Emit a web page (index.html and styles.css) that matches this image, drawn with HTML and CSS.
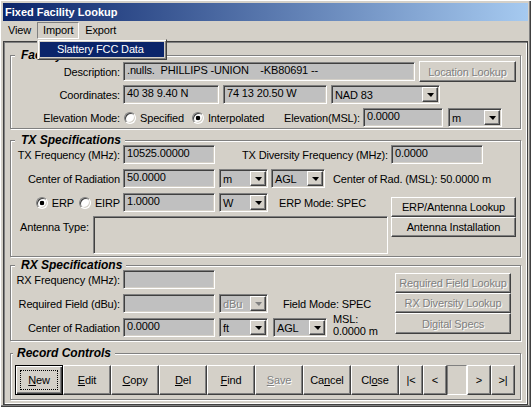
FILE: index.html
```html
<!DOCTYPE html>
<html lang="en">
<head>
    <meta charset="UTF-8">
    <title>Fixed Facility Lookup</title>
    <link rel="stylesheet" href="styles.css">
</head>
<body>

<div class="window">
    <div class="titlebar">Fixed Facility Lookup</div>

    <div class="menubar">
        <span class="menu-item">View</span>
        <span class="menu-item pressed">Import
            <div class="dropdown">
                <div class="dropdown-item">Slattery FCC Data</div>
            </div>
        </span>
        <span class="menu-item">Export</span>
    </div>

    <div class="client">
        <!-- Facility -->
        <fieldset class="group facility">
            <legend>Facility</legend>
            <div class="row">
                <label class="lbl">Description:</label>
                <div class="field desc">.nulls.  PHILLIPS -UNION    -KB80691 --</div>
                <button class="btn loc-btn" disabled>Location Lookup</button>
            </div>
            <div class="row">
                <label class="lbl">Coordinates:</label>
                <div class="field lat">40 38 9.40 N</div>
                <div class="field lon">74 13 20.50 W</div>
                <div class="combo datum"><span class="val">NAD 83</span><span class="drop"></span></div>
            </div>
            <div class="row">
                <label class="lbl">Elevation Mode:</label>
                <div class="radio-group elev-mode">
                    <span class="radio"></span><span>Specified</span>
                    <span class="radio checked second"></span><span>Interpolated</span>
                </div>
                <label class="lbl-elev">Elevation(MSL):</label>
                <div class="field elev">0.0000</div>
                <div class="combo elev-unit"><span class="val">m</span><span class="drop"></span></div>
            </div>
        </fieldset>

        <!-- TX -->
        <fieldset class="group tx">
            <legend>TX Specifications</legend>
            <div class="row first">
                <label class="lbl">TX Frequency (MHz):</label>
                <div class="field num">10525.00000</div>
                <label class="lbl-div">TX Diversity Frequency (MHz):</label>
                <div class="field num">0.0000</div>
            </div>
            <div class="row">
                <label class="lbl">Center of Radiation</label>
                <div class="field num">50.0000</div>
                <div class="combo unit"><span class="val">m</span><span class="drop"></span></div>
                <div class="combo ref"><span class="val">AGL</span><span class="drop"></span></div>
                <span class="note rad-note">Center of Rad. (MSL): 50.0000 m</span>
            </div>
            <div class="tx-lower">
                <div class="tx-left">
                    <div class="row">
                        <div class="lbl radio-group power">
                            <span class="radio checked"></span><span>ERP</span>
                            <span class="radio second"></span><span>EIRP</span>
                        </div>
                        <div class="field num">1.0000</div>
                        <div class="combo unit"><span class="val">W</span><span class="drop"></span></div>
                        <span class="note erp-note">ERP Mode: SPEC</span>
                    </div>
                    <div class="antenna">
                        <label>Antenna Type:</label>
                        <div class="field multi"></div>
                    </div>
                </div>
                <div class="btn-stack tx-btns">
                    <button class="btn">ERP/Antenna Lookup</button>
                    <button class="btn">Antenna Installation</button>
                </div>
            </div>
        </fieldset>

        <!-- RX -->
        <fieldset class="group rx">
            <legend>RX Specifications</legend>
            <div class="rx-body">
                <div class="rx-left">
                    <div class="row">
                        <label class="lbl">RX Frequency (MHz):</label>
                        <div class="field num"></div>
                    </div>
                    <div class="row">
                        <label class="lbl">Required Field (dBu):</label>
                        <div class="field num"></div>
                        <div class="combo unit disabled"><span class="val">dBu</span><span class="drop"></span></div>
                        <span class="note field-note">Field Mode: SPEC</span>
                    </div>
                    <div class="row">
                        <label class="lbl">Center of Radiation</label>
                        <div class="field num">0.0000</div>
                        <div class="combo unit"><span class="val">ft</span><span class="drop"></span></div>
                        <div class="combo ref rx-ref"><span class="val">AGL</span><span class="drop"></span></div>
                        <span class="note msl">MSL:<br>0.0000 m</span>
                    </div>
                </div>
                <div class="btn-stack rx-btns">
                    <button class="btn" disabled>Required Field Lookup</button>
                    <button class="btn" disabled>RX Diversity Lookup</button>
                    <button class="btn" disabled>Digital Specs</button>
                </div>
            </div>
        </fieldset>

        <!-- Record controls -->
        <fieldset class="group record">
            <legend>Record Controls</legend>
            <div class="rec-row">
                <button class="btn rec default"><span class="focus"><u>N</u>ew</span></button>
                <button class="btn rec"><u>E</u>dit</button>
                <button class="btn rec"><u>C</u>opy</button>
                <button class="btn rec"><u>D</u>el</button>
                <button class="btn rec"><u>F</u>ind</button>
                <button class="btn rec" disabled><u>S</u>ave</button>
                <button class="btn rec">Ca<u>n</u>cel</button>
                <button class="btn rec">Cl<u>o</u>se</button>
                <button class="btn nav">|&lt;</button>
                <button class="btn nav">&lt;</button>
                <div class="rec-pos"></div>
                <button class="btn nav">&gt;</button>
                <button class="btn nav">&gt;|</button>
            </div>
        </fieldset>
    </div>
</div>

</body>
</html>
```

FILE: styles.css
```css
html, body {
    margin: 0;
}
body {
    font-family: 'Liberation Sans', Arial, sans-serif;
    font-size: 11px;
    letter-spacing: -0.15px;
    color: #000;
    background-color: #d4d0c8;
}

/* window chrome */
.window {
    position: relative;
    width: 531px;
    height: 407px;
    box-sizing: border-box;
    padding: 3px 3px 2px;
    display: flex;
    flex-direction: column;
    background-color: #d4d0c8;
    box-shadow: inset 1px 1px #fff, inset -1px -1px #404040, inset -2px -2px #808080;
}
.titlebar {
    height: 18px;
    line-height: 18px;
    padding-left: 2px;
    color: white;
    font-weight: bold;
    letter-spacing: 0;
    background: linear-gradient(to right, #0a246a, #a6caf0);
    flex-shrink: 0;
}
.menubar {
    display: flex;
    height: 20px;
    margin-left: -1px;
    flex-shrink: 0;
}
.menu-item {
    position: relative;
    margin-top: 1px;
    height: 17px;
    box-sizing: border-box;
    padding: 0 5px;
    line-height: 15px;
    border: 1px solid transparent;
}
.menu-item.pressed {
    border-color: #808080 #fff #fff #808080;
}
.dropdown {
    position: absolute;
    left: -1px;
    top: 16px;
    width: 130px;
    box-sizing: border-box;
    padding: 2px;
    background-color: #d4d0c8;
    border: 1px solid;
    border-color: #d4d0c8 #404040 #404040 #d4d0c8;
    box-shadow: inset 1px 1px #fff, inset -1px -1px #808080;
    z-index: 10;
}
.dropdown-item {
    height: 15px;
    line-height: 15px;
    padding-left: 17px;
    white-space: nowrap;
    color: white;
    background-color: #0a246a; /* highlight */
}

.client {
    flex-grow: 1;
    box-sizing: border-box;
    padding: 6px 0 0 6px;
    border: 1px solid #404040;
    box-shadow: inset 1px 1px #808080, inset -1px -1px #fff;
}

/* group boxes */
.group {
    width: 511px;
    min-width: 0;
    box-sizing: border-box;
    margin: 0;
    padding: 0 0 1px 1px;
    border: 1px solid #808080;
    box-shadow: inset 1px 1px #fff, 1px 1px #fff;
}
.group legend {
    margin-left: 3px;
    padding: 0 4px 0 6px;
    font-size: 12px;
    line-height: 14px;
    font-weight: bold;
    font-style: italic;
    letter-spacing: 0;
    background-color: #d4d0c8;
}
.tx { margin-top: 4px; padding-bottom: 2px; }
.rx { margin-top: 1px; padding-bottom: 3px; }
.record { margin-top: 5px; padding-bottom: 4px; }
.record legend { margin-left: 1px; padding-left: 4px; }

.row {
    display: flex;
    align-items: center;
    height: 19px;
}
.facility .row + .row { margin-top: 4px; }
.tx .row + .row, .tx-lower, .rx .row + .row { margin-top: 5px; }
.tx .row.first, .rx-body { margin-top: -2px; }

.lbl {
    flex: none;
    width: 108px;
    margin-right: 3px;
    text-align: right;
    white-space: nowrap;
}
.lbl-div {
    flex: none;
    width: 173px;
    margin-right: 3px;
    text-align: right;
    white-space: nowrap;
}
.lbl-elev {
    flex: none;
    width: 77px;
    margin-right: 3px;
    text-align: right;
}
.note {
    white-space: nowrap;
}
.rad-note { margin-left: 8px; }
.erp-note { margin-left: 11px; }
.field-note { margin-left: 15px; }
.msl {
    align-self: flex-start;
    margin: -5px 0 0 6px;
    line-height: 12px;
}

/* text boxes */
.field {
    flex: none;
    height: 19px;
    box-sizing: border-box;
    padding: 0 3px;
    line-height: 15px;
    white-space: pre;
    overflow: hidden;
    background-color: #c0c0c0;
    border: 1px solid;
    border-color: #808080 #fff #fff #808080;
    box-shadow: inset 1px 1px #404040, inset -1px -1px #d4d0c8;
}
.desc { width: 292px; }
.lat { width: 96px; }
.lon { width: 104px; margin-left: 4px; }
.elev { width: 80px; }
.num { width: 92px; }
.field.multi {
    width: 295px;
    height: 38px;
    background-color: #d4d0c8;
}

/* combo boxes */
.combo {
    flex: none;
    display: flex;
    height: 19px;
    box-sizing: border-box;
    padding: 1px;
    background-color: #c0c0c0;
    border: 1px solid;
    border-color: #808080 #fff #fff #808080;
    box-shadow: inset 1px 1px #404040, inset -1px -1px #d4d0c8;
}
.combo .val {
    flex-grow: 1;
    padding-left: 2px;
    line-height: 16px;
    white-space: nowrap;
}
.combo .drop {
    width: 16px;
    box-sizing: border-box;
    display: flex;
    align-items: center;
    justify-content: center;
    background-color: #d4d0c8;
    border: 1px solid;
    border-color: #fff #404040 #404040 #fff;
    box-shadow: inset -1px -1px #808080;
}
.combo .drop::after {
    content: "";
    border-left: 4px solid transparent;
    border-right: 3px solid transparent;
    border-top: 4px solid #000;
}
.combo.disabled .val {
    color: #808080;
    text-shadow: 1px 1px #fff;
}
.combo.disabled .drop::after {
    border-top-color: #808080;
}
.datum { width: 109px; margin-left: 4px; }
.elev-unit { width: 54px; margin-left: 5px; }
.unit { width: 49px; margin-left: 4px; }
.ref { width: 54px; margin-left: 3px; }
.rx-ref { margin-left: 5px; }

/* radio buttons */
.radio-group {
    display: flex;
    align-items: center;
}
.elev-mode {
    flex: none;
    width: 160px;
    box-sizing: border-box;
    padding-left: 1px;
}
.power { justify-content: flex-end; }
.radio {
    flex: none;
    width: 12px;
    height: 12px;
    box-sizing: border-box;
    margin-right: 4px;
    border-radius: 50%;
    background-color: #fff;
    border: 1px solid;
    border-color: #808080 #fff #fff #808080;
    box-shadow: inset 1px 1px #404040, inset -1px -1px #d4d0c8;
}
.radio.checked {
    background: radial-gradient(circle, #000 2px, #fff 2.6px);
}
.elev-mode .radio.second { margin-left: 8px; }
.power .radio.second { margin-left: 5px; }

/* buttons */
.btn {
    font: inherit;
    letter-spacing: inherit;
    color: #000;
    margin: 0;
    padding: 0;
    box-sizing: border-box;
    white-space: nowrap;
    background-color: #d4d0c8;
    border: 1px solid;
    border-color: #fff #404040 #404040 #fff;
    box-shadow: inset -1px -1px #808080;
}
.btn:disabled {
    color: #808080;
    text-shadow: 1px 1px #fff;
}
.loc-btn {
    width: 97px;
    height: 21px;
    margin-left: 4px;
}
.btn-stack {
    display: flex;
    flex-direction: column;
}
.btn-stack .btn { height: 20px; }
.tx-lower { display: flex; }
.tx-left { width: 376px; }
.tx-btns {
    width: 125px;
    margin: 4px 0 0 3px;
}
.antenna {
    display: flex;
    margin-top: 4px;
}
.antenna label {
    width: 73px;
    padding: 5px 0 0 8px;
}
.rx-body { display: flex; }
.rx-btns {
    width: 116px;
    margin: 3px 9px 0 auto;
}
.rx-btns .btn:last-child { height: 21px; }

/* record controls */
.rec-row {
    display: flex;
    margin: 5px 0 0 3px;
}
.btn.rec {
    width: 48px;
    height: 30px;
}
.btn.default {
    border: 1px solid #000;
    box-shadow: inset 1px 1px #fff, inset -1px -1px #404040, inset -2px -2px #808080;
    padding: 4px;
}
.btn.default .focus {
    display: block;
    height: 100%;
    box-sizing: border-box;
    border: 1px dotted #000;
    line-height: 18px;
}
.btn.nav {
    width: 24px;
    height: 30px;
}
.rec-pos {
    width: 20px;
    height: 30px;
    box-sizing: border-box;
    border: 1px solid;
    border-color: #808080 #fff #fff #808080;
}
```
